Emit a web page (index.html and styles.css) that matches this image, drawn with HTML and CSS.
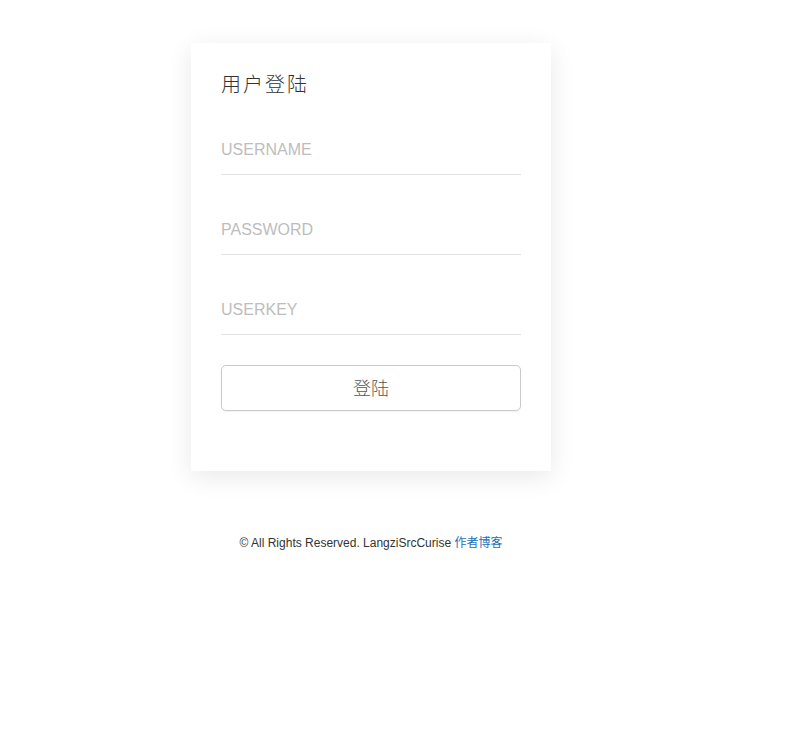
FILE: index.html
```html
<!DOCTYPE html>
<html lang="zh-CN">
<head>
<meta charset="utf-8">
<title>用户登陆</title>
<link rel="stylesheet" href="styles.css">
</head>
<body>
<div class="page">
  <div class="card">
    <h1 class="title">用户登陆</h1>
    <form class="form">
      <input class="field" type="text" placeholder="USERNAME">
      <input class="field" type="password" placeholder="PASSWORD">
      <input class="field" type="text" placeholder="USERKEY">
      <button class="btn" type="button">登陆</button>
    </form>
  </div>
  <p class="footer">© All Rights Reserved. LangziSrcCurise <a class="link" href="#">作者博客</a></p>
</div>
</body>
</html>
```

FILE: styles.css
```css
html, body {
  margin: 0;
  padding: 0;
  background: #fff;
}
body {
  font-family: "Liberation Sans", Arial, "Noto Sans CJK SC", sans-serif;
}
.page {
  width: 360px;
  padding: 43px 0 0 191px;
}
.card {
  box-sizing: border-box;
  width: 360px;
  height: 428px;
  padding: 30px 30px;
  background: #fff;
  box-shadow: 0 6px 24px rgba(0, 0, 0, 0.09);
}
.title {
  margin: 0;
  height: 22px;
  font-family: "Noto Sans CJK SC", sans-serif;
  font-weight: 300;
  font-size: 20px;
  line-height: 22px;
  letter-spacing: 2px;
  color: #333;
}
.form {
  display: flex;
  flex-direction: column;
  gap: 30px;
  margin-top: 30px;
}
.field {
  box-sizing: border-box;
  display: block;
  width: 300px;
  height: 50px;
  padding: 0;
  border: 0;
  border-bottom: 1px solid #e3e3e3;
  outline: none;
  background: transparent;
  font-family: "Liberation Sans", Arial, sans-serif;
  font-size: 16px;
  color: #333;
}
.field::placeholder {
  color: #bdbdbd;
}
.btn {
  box-sizing: border-box;
  width: 300px;
  height: 46px;
  padding: 0 0 2px;
  border: 1px solid #cacaca;
  border-radius: 5px;
  background: #fff;
  box-shadow: 0 1px 2px rgba(0, 0, 0, 0.06);
  font-family: "Noto Sans CJK SC", sans-serif;
  font-weight: 300;
  font-size: 18px;
  color: #555;
  cursor: pointer;
}
.footer {
  margin: 64px 0 0;
  width: 360px;
  text-align: center;
  font-size: 12px;
  line-height: 16px;
  color: #333;
}
.link {
  color: #1a6fb5;
  text-decoration: none;
}
```
